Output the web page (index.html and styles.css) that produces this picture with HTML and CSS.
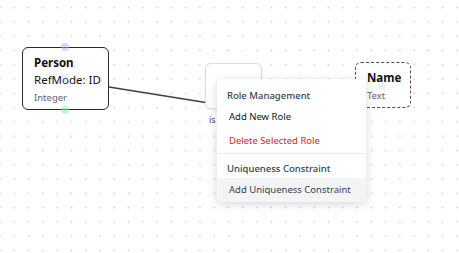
FILE: index.html
```html
<!DOCTYPE html>
<html lang="en">
<head>
    <meta charset="UTF-8">
    <title>Diagram Editor</title>
    <link rel="stylesheet" href="styles.css">
</head>
<body>
    <div class="canvas">
        <svg class="edges" width="459" height="253">
            <line x1="109" y1="87" x2="215" y2="104" stroke="#3f3f46" stroke-width="1.5"/>
        </svg>

        <div class="node entity person">
            <span class="handle handle-top"></span>
            <span class="handle handle-mid"></span>
            <span class="handle handle-bottom"></span>
            <div class="node-title">Person</div>
            <div class="node-ref">RefMode: ID</div>
            <div class="node-type">Integer</div>
        </div>

        <div class="node role"></div>
        <div class="role-label">is</div>

        <div class="node entity value-type">
            <span class="handle handle-mid"></span>
            <div class="node-title">Name</div>
            <div class="node-type">Text</div>
        </div>

        <div class="context-menu">
            <div class="menu-header">Role Management</div>
            <div class="menu-item">Add New Role</div>
            <div class="menu-item danger">Delete Selected Role</div>
            <div class="menu-divider"></div>
            <div class="menu-header">Uniqueness Constraint</div>
            <div class="menu-item active">Add Uniqueness Constraint</div>
        </div>
    </div>
</body>
</html>
```

FILE: styles.css
```css
* {
    box-sizing: border-box;
    margin: 0;
    padding: 0;
}

body {
    font-family: 'Noto Sans', 'Open Sans', sans-serif;
    color: #1f2937;
    background: #fff;
}

.canvas {
    position: relative;
    width: 459px;
    height: 253px;
    overflow: hidden;
    background-color: #fff;
    background-image: radial-gradient(circle, #c9c9c9 0.75px, transparent 1.05px);
    background-size: 14.286px 14.286px;
    background-position: -7.14px 0.5px;
}

.edges {
    position: absolute;
    left: 0;
    top: 0;
}

/* nodes sit on the free canvas */
.node {
    position: absolute;
    background: #fff;
    border-radius: 6px;
}

.entity {
    display: flex;
    flex-direction: column;
    border: 1.5px solid #262a31;
}

.person {
    left: 22px;
    top: 47px;
    width: 87px;
    height: 63px;
    padding: 7px 0 0 11px;
}

.value-type {
    left: 355px;
    top: 62px;
    width: 56px;
    height: 46px;
    padding: 7px 0 0 11px;
    border-style: dashed;
    border-color: #4b5058;
}

.node-title {
    font-size: 11.5px;
    font-weight: 700;
    line-height: 16px;
    color: #111;
}

.node-ref {
    font-size: 11.5px;
    line-height: 18px;
    color: #111;
}

.node-type {
    font-size: 9.5px;
    line-height: 17px;
    color: #5b6472;
}

.value-type .node-type {
    line-height: 20px;
}

.handle {
    position: absolute;
    width: 8px;
    height: 8px;
    border-radius: 50%;
    left: 38px;
    background: rgba(165, 180, 252, 0.5);
}

.handle-top { top: -5px; }
.handle-mid { top: 26px; background: rgba(191, 203, 252, 0.3); }
.handle-bottom { top: 58px; background: rgba(134, 239, 172, 0.5); }

.value-type .handle-mid {
    left: 22px;
    top: 19px;
}

.role {
    left: 205px;
    top: 63px;
    width: 57px;
    height: 46px;
    border: 1px solid #d9dce1;
    box-shadow: 0 1px 3px rgba(0, 0, 0, 0.08);
}

.role-label {
    position: absolute;
    left: 209px;
    top: 113px;
    font-size: 9px;
    color: #4b5563;
}

/* right-click menu over the canvas */
.context-menu {
    position: absolute;
    left: 217px;
    top: 79px;
    width: 149px;
    padding: 2px 0 0;
    background: #fff;
    border-radius: 4px;
    box-shadow: 0 2px 10px rgba(0, 0, 0, 0.16);
    overflow: hidden;
}

.menu-header {
    padding: 8px 10px 2px;
    font-size: 9.5px;
    font-weight: 500;
    line-height: 14px;
    color: #374151;
}

.menu-item {
    padding: 5px 12px;
    font-size: 9.5px;
    line-height: 14px;
    color: #111827;
}

.menu-item.danger {
    color: #dc2626;
}

.menu-item.active {
    background: #f3f4f6;
    color: #374151;
}

.menu-divider {
    height: 1px;
    background: #ececec;
}
```
